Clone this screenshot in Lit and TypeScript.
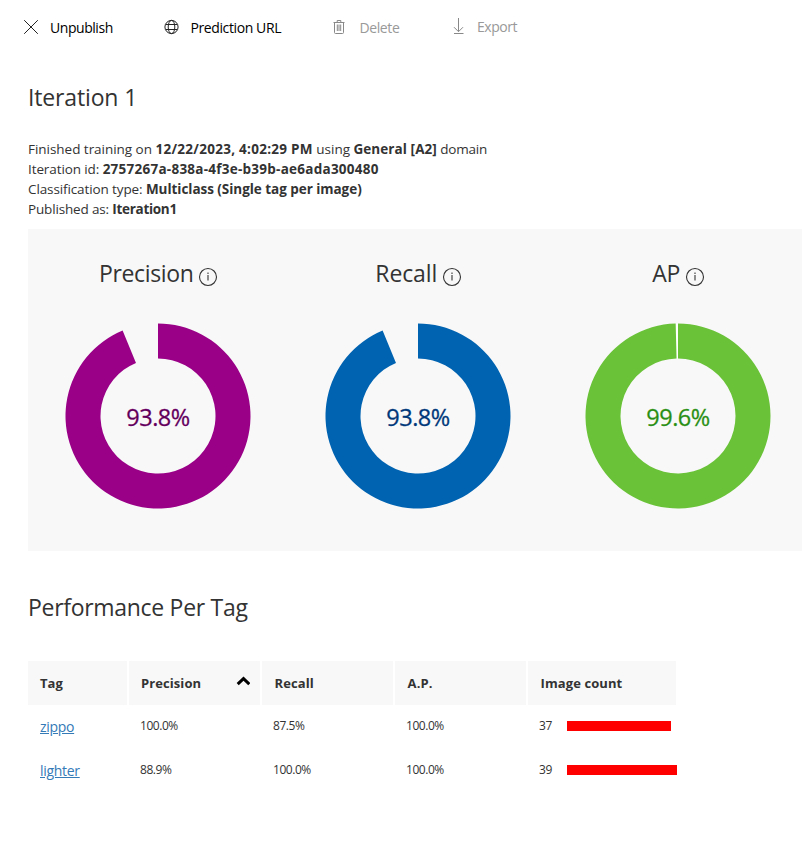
import { LitElement, html, svg, css } from "lit";
import { customElement, property } from "lit/decorators.js";

interface Metric { name: string; cls: string; share: number; label: string; }
interface TagRow { tag: string; precision: string; recall: string; ap: string; count: number; }

const METRICS: Metric[] = [
  { name: "Precision", cls: "precision", share: 0.9375, label: "93.8%" },
  { name: "Recall", cls: "recall", share: 0.9375, label: "93.8%" },
  { name: "AP", cls: "ap", share: 0.996, label: "99.6%" },
];

const ROWS: TagRow[] = [
  { tag: "zippo", precision: "100.0%", recall: "87.5%", ap: "100.0%", count: 37 },
  { tag: "lighter", precision: "88.9%", recall: "100.0%", ap: "100.0%", count: 39 },
];

function ring(share: number, outer = 92.5, inner = 57.5): string {
  const a = share * Math.PI * 2;
  const s = Math.sin(a);
  const c = -Math.cos(a);
  return `M0 ${-outer}A${outer} ${outer} 0 1 1 ${outer * s} ${outer * c}L${inner * s} ${inner * c}A${inner} ${inner} 0 1 0 0 ${-inner}Z`;
}

@customElement("metric-donut")
export class MetricDonut extends LitElement {
  @property({ attribute: false }) metric!: Metric;

  static styles = css`
    :host { display: flex; flex-direction: column; align-items: center; width: 260px; }
    .title { display: flex; align-items: center; height: 32px; margin-top: 28px; font-size: 23px; line-height: 32px; }
    .name { letter-spacing: -0.1px; }
    .precision .name { letter-spacing: -0.35px; }
    .info { width: 20px; height: 20px; margin: 8px -1px 0 4.5px; }
    .chart { display: block; width: 186px; height: 186px; margin-top: 34px; }
    .hole { fill: #fff; }
    .value { font-size: 23.5px; letter-spacing: -0.5px; text-anchor: middle; stroke-width: 0.3px; }
    .precision .arc { fill: #990087; }
    .recall .arc { fill: #0063b1; }
    .ap .arc { fill: #6ac238; }
    .precision .value { fill: #5c0058; stroke: #7a0070; }
    .recall .value { fill: #00377a; stroke: #07407f; }
    .ap .value { fill: #268c14; stroke: #3f9e28; }
  `;

  render() {
    const m = this.metric;
    return html`
      <div class="title ${m.cls}">
        <span class="name">${m.name}</span>
        <svg class="info" viewBox="0 0 20 20" fill="none" stroke="#333" stroke-width="1.1">
          <circle cx="10" cy="10" r="8.5" />
          <path d="M10 8v5.6M10 5.6v1.4" />
        </svg>
      </div>
      <svg class="chart ${m.cls}" viewBox="-93 -93 186 186">
        ${m.cls === "ap" ? svg`<path class="hole" d="M-2.6 -92.4H0V-57.5H-1.8Z" />` : ""}
        <path class="arc" d=${ring(m.share)} />
        <text class="value" x="0" y="10">${m.label}</text>
      </svg>
    `;
  }
}

@customElement("app-root")
export class AppRoot extends LitElement {
  static styles = css`
    :host { display: block; width: 802px; height: 849px; overflow: hidden; background: #fff; color: #333;
      font-family: "Open Sans", "Noto Sans", sans-serif; font-size: 14px; line-height: 20px; }
    .toolbar { display: flex; height: 56px; color: #000; font-size: 14px; }
    .cmd { display: flex; align-items: flex-start; padding-top: 18px; }
    .cmd svg { display: block; flex: none; width: 16px; height: 18px; fill: none; stroke: #222; }
    .unpublish { width: 140px; padding-left: 23px; gap: 11px; letter-spacing: -0.45px; }
    .url { width: 169px; gap: 11.5px; letter-spacing: -0.4px; }
    .delete { width: 120px; gap: 11.5px; letter-spacing: -0.4px; color: #999; }
    .export { gap: 9px; padding-top: 17px; letter-spacing: -0.45px; color: #999; }
    .cmd.off svg { stroke: #888; }
    .heading { margin: 0 0 0 28px; font-size: 23px; font-weight: 400; line-height: 32px; }
    .main-heading { margin-top: 25px; letter-spacing: -0.15px; }
    .details { margin: 26px 0 0 28px; font-size: 13.5px; white-space: nowrap; }
    .l1 { letter-spacing: -0.03px; }
    .l1 .date { letter-spacing: 0.28px; }
    .l1 .domain { letter-spacing: 0.08px; }
    .l1 .tail { letter-spacing: -0.2px; }
    .l2 { letter-spacing: -0.1px; }
    .l2 b { letter-spacing: 0.25px; }
    .l3 { letter-spacing: -0.11px; }
    .l3 b { letter-spacing: -0.04px; }
    .l4 { letter-spacing: -0.16px; }
    .l4 b { letter-spacing: -0.3px; }
    .panel { display: flex; height: 322px; margin: 10px 0 0 28px; background: #f8f8f8; }
    .panel metric-donut { flex: none; }
    .tag-heading { margin-top: 40px; letter-spacing: -0.3px; }
    .grid { display: grid; grid-template-columns: 99px 131px 131px 131px 148px; column-gap: 2px; margin: 38px 0 0 28px; width: 660px; }
    .th { display: flex; align-items: center; justify-content: space-between; height: 44px; padding: 0 10px 0 12px; box-sizing: border-box; background: #f8f8f8; font-size: 13px; font-weight: 700; letter-spacing: 0.08px; }
    .th:nth-child(n + 3) { padding-left: 12.6px; }
    .sort { width: 14px; height: 10px; margin-top: -5px; fill: none; stroke: #000; stroke-width: 3; }
    .td { display: flex; height: 44px; padding: 11px 0 0 11px; box-sizing: border-box; font-size: 12px; letter-spacing: -0.45px; }
    .td.link { padding: 12px 0 0 12px; font-size: 14px; letter-spacing: -0.3px; }
    .td a { color: #337ab7; text-decoration: underline; }
    .count { width: 28px; flex: none; }
    .bar { flex: none; height: 10px; margin-top: 5px; background: #f00; }
  `;

  private header(label: string, sorted = false) {
    return html`<div class="th"><span>${label}</span>${sorted
      ? html`<svg class="sort" viewBox="0 0 14 10"><path d="M1.7 8.2 7.5 2.6 13.3 8.2" /></svg>` : ""}</div>`;
  }

  private row(r: TagRow) {
    const width = Math.round((r.count / 39) * 110);
    return html`
      <div class="td link"><a>${r.tag}</a></div>
      <div class="td">${r.precision}</div>
      <div class="td">${r.recall}</div>
      <div class="td">${r.ap}</div>
      <div class="td"><span class="count">${r.count}</span><span class="bar" style="width:${width}px"></span></div>
    `;
  }

  render() {
    return html`
      <div class="toolbar">
        <div class="cmd unpublish">
          <svg viewBox="0 0 16 18"><path d="M1.2 2.2 14.8 15.8M14.8 2.2 1.2 15.8" /></svg>
          <span>Unpublish</span>
        </div>
        <div class="cmd url">
          <svg viewBox="0 0 16 18"><circle cx="8.5" cy="9" r="6.6" /><ellipse cx="8.5" cy="9" rx="3.3" ry="6.6" /><path d="M2.7 6.5h11.6M2.7 11.5h11.6" /></svg>
          <span>Prediction URL</span>
        </div>
        <div class="cmd delete off">
          <svg viewBox="0 0 16 18"><path d="M1.5 4.5h11M5.2 4V2.5h3.6V4M2.5 4.5v10q0 1 1 1h7q1 0 1-1v-10M5.3 6.5v6.5M7 6.5v6.5M8.7 6.5v6.5" /></svg>
          <span>Delete</span>
        </div>
        <div class="cmd export off">
          <svg viewBox="0 0 16 18"><path d="M6.5 1v13.5M2 10.2l4.5 4.5 4.5-4.5M2 16.5h9.5" /></svg>
          <span>Export</span>
        </div>
      </div>
      <h1 class="heading main-heading">Iteration 1</h1>
      <div class="details">
        <div class="l1">Finished training on <b class="date">12/22/2023, 4:02:29 PM</b> using <b class="domain">General [A2]</b><span class="tail"> domain</span></div>
        <div class="l2">Iteration id: <b>2757267a-838a-4f3e-b39b-ae6ada300480</b></div>
        <div class="l3">Classification type: <b>Multiclass (Single tag per image)</b></div>
        <div class="l4">Published as: <b>Iteration1</b></div>
      </div>
      <div class="panel">${METRICS.map((m) => html`<metric-donut .metric=${m}></metric-donut>`)}</div>
      <h2 class="heading tag-heading">Performance Per Tag</h2>
      <div class="grid">
        ${this.header("Tag")}${this.header("Precision", true)}${this.header("Recall")}${this.header("A.P.")}${this.header("Image count")}
        ${ROWS.map((r) => this.row(r))}
      </div>
    `;
  }
}
